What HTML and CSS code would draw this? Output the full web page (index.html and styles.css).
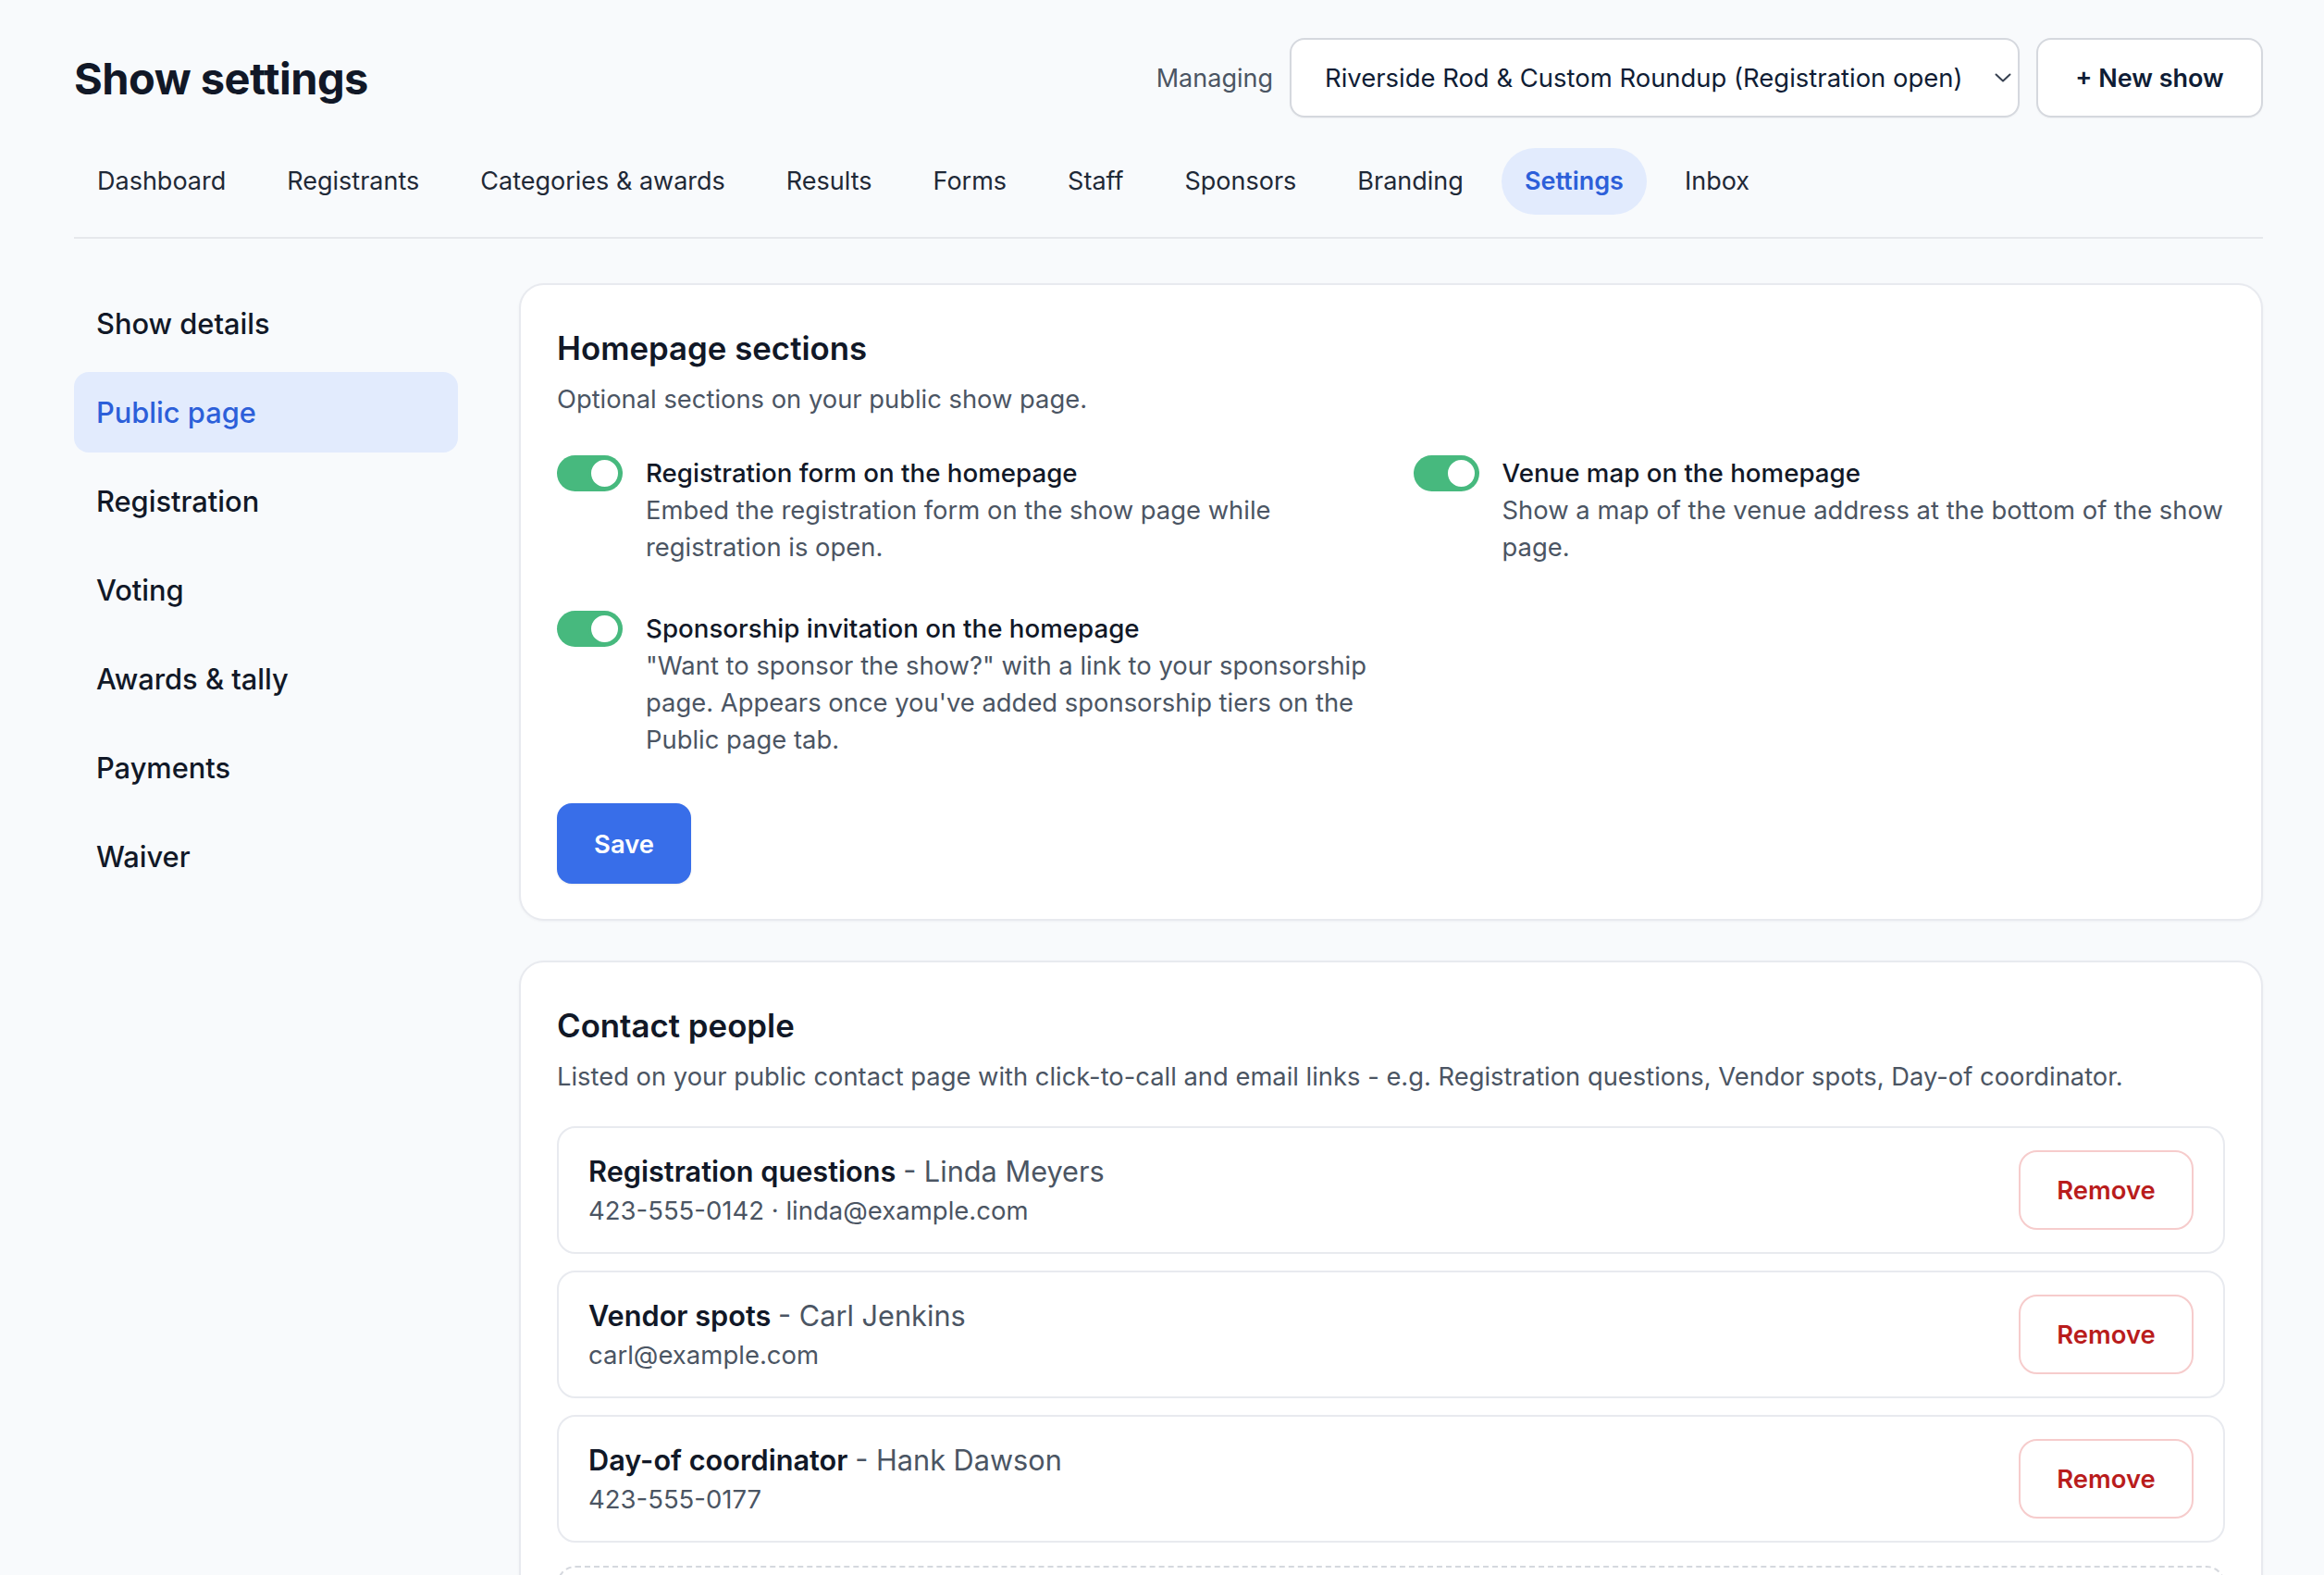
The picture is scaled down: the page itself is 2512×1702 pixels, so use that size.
FILE: index.html
```html
<!DOCTYPE html>
<html lang="en">
<head>
<meta charset="utf-8">
<title>Show settings</title>
<link rel="stylesheet" href="styles.css">
</head>
<body>
<div class="page">
  <header class="topbar">
    <h1 class="title">Show settings</h1>
    <div class="manage">
      <span class="manage-label">Managing</span>
      <div class="select">
        <span class="select-text">Riverside Rod &amp; Custom Roundup (Registration open)</span>
        <svg class="chev" width="18" height="10" viewBox="0 0 18 10"><path d="M1.5 1.5 L9 8.5 L16.5 1.5" fill="none" stroke="#374151" stroke-width="2" stroke-linecap="round" stroke-linejoin="round"/></svg>
      </div>
      <button class="btn-outline">+ New show</button>
    </div>
  </header>

  <nav class="tabs">
    <a class="tab">Dashboard</a>
    <a class="tab">Registrants</a>
    <a class="tab">Categories &amp; awards</a>
    <a class="tab">Results</a>
    <a class="tab">Forms</a>
    <a class="tab">Staff</a>
    <a class="tab">Sponsors</a>
    <a class="tab">Branding</a>
    <a class="tab active">Settings</a>
    <a class="tab">Inbox</a>
  </nav>

  <div class="layout">
    <aside class="sidenav">
      <a class="side-item">Show details</a>
      <a class="side-item active">Public page</a>
      <a class="side-item">Registration</a>
      <a class="side-item">Voting</a>
      <a class="side-item">Awards &amp; tally</a>
      <a class="side-item">Payments</a>
      <a class="side-item">Waiver</a>
    </aside>

    <main class="content">
      <section class="card">
        <h2 class="card-title">Homepage sections</h2>
        <p class="card-sub">Optional sections on your public show page.</p>
        <div class="toggle-grid">
          <div class="toggle-item">
            <span class="toggle on"></span>
            <div class="toggle-text">
              <div class="toggle-label">Registration form on the homepage</div>
              <div class="toggle-desc">Embed the registration form on the show page while registration is open.</div>
            </div>
          </div>
          <div class="toggle-item">
            <span class="toggle on"></span>
            <div class="toggle-text">
              <div class="toggle-label">Venue map on the homepage</div>
              <div class="toggle-desc">Show a map of the venue address at the bottom of the show page.</div>
            </div>
          </div>
          <div class="toggle-item">
            <span class="toggle on"></span>
            <div class="toggle-text">
              <div class="toggle-label">Sponsorship invitation on the homepage</div>
              <div class="toggle-desc">"Want to sponsor the show?" with a link to your sponsorship page. Appears once you've added sponsorship tiers on the Public page tab.</div>
            </div>
          </div>
        </div>
        <button class="btn-primary">Save</button>
      </section>

      <section class="card">
        <h2 class="card-title">Contact people</h2>
        <p class="card-sub">Listed on your public contact page with click-to-call and email links - e.g. Registration questions, Vendor spots, Day-of coordinator.</p>
        <div class="contacts">
          <div class="contact">
            <div class="contact-info">
              <div class="contact-title">Registration questions <span class="contact-name">- Linda Meyers</span></div>
              <div class="contact-meta">423-555-0142 · linda@example.com</div>
            </div>
            <button class="btn-danger">Remove</button>
          </div>
          <div class="contact">
            <div class="contact-info">
              <div class="contact-title">Vendor spots <span class="contact-name">- Carl Jenkins</span></div>
              <div class="contact-meta">carl@example.com</div>
            </div>
            <button class="btn-danger">Remove</button>
          </div>
          <div class="contact">
            <div class="contact-info">
              <div class="contact-title">Day-of coordinator <span class="contact-name">- Hank Dawson</span></div>
              <div class="contact-meta">423-555-0177</div>
            </div>
            <button class="btn-danger">Remove</button>
          </div>
          <div class="contact-add"></div>
        </div>
      </section>
    </main>
  </div>
</div>
</body>
</html>
```

FILE: styles.css
```css
* { box-sizing: border-box; }

html, body {
  margin: 0;
  padding: 0;
}

body {
  background: #f8fafc;
  font-family: Inter, "Noto Sans", "Liberation Sans", sans-serif;
  color: #111827;
  font-size: 27.4px;
}

.page {
  padding: 41px 66px 80px 80px;
}

/* Header */
.topbar {
  display: flex;
  align-items: center;
  justify-content: space-between;
  height: 86px;
}

.title {
  margin: 0;
  font-size: 47px;
  font-weight: 700;
  color: #111827;
  letter-spacing: -0.5px;
}

.manage {
  display: flex;
  align-items: center;
  gap: 18px;
}

.manage-label {
  color: #4b5563;
  font-size: 27px;
}

.select {
  width: 789px;
  height: 86px;
  background: #fff;
  border: 2px solid #d5d8de;
  border-radius: 16px;
  display: flex;
  align-items: center;
  justify-content: space-between;
  padding: 0 7px 0 36px;
  color: #0f1d35;
  font-size: 27.45px;
  box-shadow: 0 1px 2px rgba(0, 0, 0, 0.04);
}

.chev { flex: none; }

.btn-outline {
  height: 86px;
  width: 245px;
  background: #fff;
  border: 2px solid #d5d8de;
  border-radius: 16px;
  font-family: inherit;
  font-size: 27px;
  font-weight: 600;
  color: #0f1d35;
  box-shadow: 0 1px 2px rgba(0, 0, 0, 0.04);
}

/* Tabs */
.tabs {
  display: flex;
  gap: 16px;
  margin-top: 33px;
  padding-bottom: 24px;
  border-bottom: 2px solid #e6e8ec;
}

.tab {
  height: 72px;
  line-height: 72px;
  padding: 0 25px;
  border-radius: 36px;
  font-size: 27px;
  color: #1f2937;
}

.tab.active {
  background: #e2ebfd;
  color: #2c5fd9;
  font-weight: 600;
}

/* Layout */
.layout {
  display: grid;
  grid-template-columns: 415px 1fr;
  gap: 66px;
  margin-top: 48px;
}

.sidenav {
  display: flex;
  flex-direction: column;
  gap: 9px;
}

.side-item {
  height: 87px;
  display: flex;
  align-items: center;
  padding-left: 24px;
  border-radius: 16px;
  font-size: 30.8px;
  font-weight: 500;
  color: #111827;
}

.side-item.active {
  background: #e2ebfd;
  color: #2c5fd9;
}

.content {
  display: flex;
  flex-direction: column;
  gap: 43px;
}

/* Cards */
.card {
  background: #fff;
  border: 2px solid #e8eaef;
  border-radius: 27px;
  padding: 44px 39px 38px;
  box-shadow: 0 1px 3px rgba(15, 23, 42, 0.04);
}

.card-title {
  margin: 0;
  font-size: 34.8px;
  line-height: 48px;
  font-weight: 600;
  color: #111827;
}

.card-sub {
  margin: 12px 0 0;
  font-size: 27.35px;
  line-height: 40px;
  color: #4b5563;
}

.toggle-grid {
  margin-top: 39px;
  display: grid;
  grid-template-columns: 1fr 1fr;
  gap: 48px;
}

.toggle-item {
  display: flex;
  gap: 25px;
  align-items: flex-start;
}

.toggle {
  flex: none;
  position: relative;
  width: 71px;
  height: 39px;
  border-radius: 20px;
  background: #47b97e;
  margin-top: 1px;
}

.toggle::after {
  content: "";
  position: absolute;
  top: 2px;
  right: 2px;
  width: 35px;
  height: 35px;
  border-radius: 50%;
  background: #fff;
  border: 3px solid #47b97e;
  box-sizing: border-box;
}

.toggle-label {
  font-size: 27.7px;
  line-height: 40px;
  font-weight: 500;
  color: #111827;
}

.toggle-desc {
  font-size: 27.4px;
  line-height: 40px;
  color: #4b5563;
}

.btn-primary {
  margin-top: 49px;
  width: 145px;
  height: 87px;
  background: #386ee9;
  border: none;
  border-radius: 16px;
  color: #fff;
  font-family: inherit;
  font-size: 27.4px;
  font-weight: 600;
  box-shadow: 0 1px 2px rgba(0, 0, 0, 0.08);
}

/* Contacts */
.contacts {
  margin-top: 33px;
  display: flex;
  flex-direction: column;
  gap: 18px;
}

.contact {
  border: 2px solid #e8eaef;
  border-radius: 20px;
  padding: 24px 32px;
  display: flex;
  align-items: center;
  justify-content: space-between;
}

.contact-title {
  font-size: 30.7px;
  line-height: 44px;
  font-weight: 600;
  color: #111827;
}

.contact-name {
  font-weight: 400;
  color: #4b5563;
}

.contact-meta {
  font-size: 27.5px;
  line-height: 40px;
  color: #4b5563;
}

.btn-danger {
  width: 189px;
  height: 86px;
  background: #fff;
  border: 2px solid #f6cccc;
  border-radius: 20px;
  color: #b91c1c;
  font-family: inherit;
  font-size: 27.4px;
  font-weight: 600;
}

.contact-add {
  margin-top: 7px;
  border: 2px dashed #d5d8de;
  border-radius: 20px;
  min-height: 160px;
}
```
